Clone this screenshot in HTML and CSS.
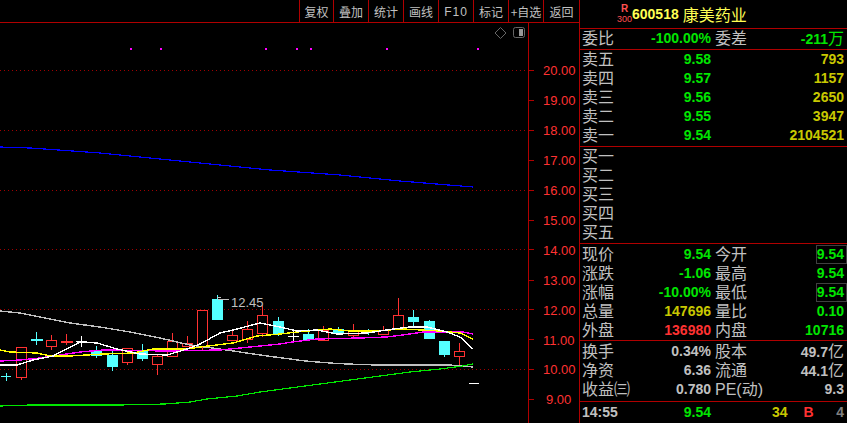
FILE: index.html
```html
<!DOCTYPE html>
<html lang="zh-CN">
<head>
  <meta charset="UTF-8">
  <title>康美药业 600518</title>
  <link rel="stylesheet" href="styles.css">
</head>
<body>
  <div class="left">
    <div class="toolbar">
      <span class="tool first">复权</span>
      <span class="tool">叠加</span>
      <span class="tool">统计</span>
      <span class="tool">画线</span>
      <span class="tool latin">F10</span>
      <span class="tool">标记</span>
      <span class="tool">+自选</span>
      <span class="tool last">返回</span>
    </div>
    <svg class="chart" viewBox="0 23 579 400" width="579" height="400">
      <!-- grid -->
      <path class="grid" d="M0 70.5H527M0 130.5H527M0 190.5H527M0 249.5H527M0 309.5H527M0 369.5H527"/>
      <path class="axis" d="M528.5 23V423"/>
      <path class="axis" d="M529 70.5h5M529 100.5h5M529 130.5h5M529 160.5h5M529 190.5h5M529 220.5h5M529 249.5h5M529 280.5h5M529 309.5h5M529 339.5h5M529 369.5h5M529 399.5h5"/>
      <g class="price">
        <text x="543" y="75">20.00</text>
        <text x="543" y="105">19.00</text>
        <text x="543" y="135">18.00</text>
        <text x="543" y="165">17.00</text>
        <text x="543" y="195">16.00</text>
        <text x="543" y="225">15.00</text>
        <text x="543" y="255">14.00</text>
        <text x="543" y="285">13.00</text>
        <text x="543" y="315">12.00</text>
        <text x="543" y="345">11.00</text>
        <text x="543" y="374">10.00</text>
        <text x="546" y="404">9.00</text>
      </g>

      <!-- marks and icons -->
      <path class="mark" d="M130 48h2v2h-2zM160 48h2v2h-2zM265 48h2v2h-2zM296 48h2v2h-2zM310 48h2v2h-2zM386 48h2v2h-2zM477 48h2v2h-2z"/>
      <path class="icon" d="M500.5 27.5l5.5 5.5-5.5 5.5-5.5-5.5z"/>
      <rect class="icon" x="513.5" y="27.5" width="11" height="10" rx="2"/>
      <rect class="icon-fill" x="519" y="29" width="4" height="7"/>

      <!-- candles -->
      <path class="up" d="M16.5 347.5h10v30h-10zM21.5 377.5v2
        M46.5 340.5h10v6h-10zM51.5 335v5M51.5 347v3
        M61 341.5h11v1h-11zM66.5 334v11
        M152.5 356.5h10v8h-10zM157.5 354v2M157.5 365v10
        M167.5 341.5h10v15h-10zM172.5 333v8
        M122.5 348.5h10v14h-10zM127.5 363v2
        M182.5 343.5h10v3h-10zM187.5 336v7
        M197.5 310.5h10v36h-10zM202.5 347v3
        M227.5 335.5h10v5h-10zM232.5 329v6
        M242.5 329.5h10v10h-10zM247.5 321v8M247.5 340v3
        M257.5 315.5h10v18h-10zM262.5 305v10M262.5 334v3
        M318.5 330.5h10v10h-10zM323.5 326v4
        M348.5 331.5h10v4h-10zM353.5 324v7M353.5 336v3
        M378.5 330.5h10v4h-10zM383.5 326v4
        M393.5 315.5h10v13h-10zM398.5 298v17
        M454.5 351.5h10v5h-10zM459.5 343v8M459.5 357v9"/>
      <path class="down" d="M1 376.5h10M6.5 373v8
        M31 339.5h11v1h-11zM36.5 332v13
        M91.5 351.5h10v4h-10zM96.5 346v5M96.5 356v2
        M107.5 355.5h10v11h-10zM112.5 351v4M112.5 367v4
        M137.5 351.5h10v7h-10zM142.5 344v7M142.5 359v2
        M212.5 299.5h10v20h-10zM217.5 295v4
        M273.5 321.5h10v12h-10zM278.5 317v4M278.5 334v2
        M303.5 334.5h10v5h-10zM308.5 329v5M308.5 340v1
        M333.5 329.5h10v3h-10zM338.5 327v2M338.5 333v1
        M363 332.5h11M368.5 329v6
        M408.5 317.5h10v4h-10zM413.5 310v7M413.5 322v4
        M424.5 321.5h10v17h-10zM429.5 320v1
        M439.5 341.5h10v13h-10zM444.5 355v2"/>
      <path class="doji" d="M76 341.5h11M81.5 336v11M288 336.5h11M293.5 331v10M469 383.5h10"/>

      <!-- moving averages -->
      <polyline class="ma gray" points="0,311 20,313 50,319 70,323 100,327 130,332 160,338 190,345 220,349 240,352 260,355 275,357 290,359 305,361 330,363 347,364 377,365 450,365 473,367"/>
      <polyline class="ma green-line" points="0,406 30,405 120,405 165,404 190,402 207,399 237,396 260,392 290,388 320,384 350,380 380,376 410,372 440,369 463,366 473,364"/>
      <polyline class="ma magenta" points="0,361 20,360 40,358 60,355 80,352 103,350 167,351 220,350 230,349 250,347 260,346 280,344 292,342 317,339 360,338 387,337 410,334 423,332 463,332 473,334"/>
      <polyline class="ma yellow-line" points="0,350 10,352 37,353 50,356 70,356 103,354 133,353 153,349 187,349 200,347 233,343 257,336 280,334 297,332 330,329 350,331 373,331 403,329 440,331 460,333 473,339"/>
      <polyline class="ma white" points="0,365 17,365 33,360 53,356 80,342 97,343 117,349 140,354 167,355 187,349 200,344 220,333 233,330 260,323 280,327 297,331 317,330 337,334 367,333 393,329 410,327 427,327 447,332 460,337 473,349"/>
      <polyline class="ma blue" points="0,147 30,148 100,153 180,161 270,170 340,175 400,181 473,187"/>

      <!-- high label -->
      <path class="tag" d="M217 297h4M218 299.5h11"/>
      <text class="high" x="231" y="307">12.45</text>
    </svg>
  </div>

  <div class="panel">
    <div class="head">
      <span class="badge"><b>R</b>300</span>
      <span class="code">600518</span>
      <span class="name">康美药业</span>
    </div>
    <div class="sec rows">
      <div class="row"><div class="cell"><span>委比</span><b class="green">-100.00%</b></div><div class="cell"><span>委差</span><b class="green">-211<i>万</i></b></div></div>
    </div>
    <div class="sec rows">
      <div class="row"><div class="cell"><span>卖五</span><b class="green">9.58</b></div><div class="cell"><b class="yellow">793</b></div></div>
      <div class="row"><div class="cell"><span>卖四</span><b class="green">9.57</b></div><div class="cell"><b class="yellow">1157</b></div></div>
      <div class="row"><div class="cell"><span>卖三</span><b class="green">9.56</b></div><div class="cell"><b class="yellow">2650</b></div></div>
      <div class="row"><div class="cell"><span>卖二</span><b class="green">9.55</b></div><div class="cell"><b class="yellow">3947</b></div></div>
      <div class="row"><div class="cell"><span>卖一</span><b class="green">9.54</b></div><div class="cell"><b class="yellow">2104521</b></div></div>
    </div>
    <div class="sec rows">
      <div class="row"><div class="cell"><span>买一</span></div></div>
      <div class="row"><div class="cell"><span>买二</span></div></div>
      <div class="row"><div class="cell"><span>买三</span></div></div>
      <div class="row"><div class="cell"><span>买四</span></div></div>
      <div class="row"><div class="cell"><span>买五</span></div></div>
    </div>
    <div class="sec rows stats">
      <div class="row"><div class="cell"><span>现价</span><b class="green">9.54</b></div><div class="cell"><span>今开</span><b class="green boxed">9.54</b></div></div>
      <div class="row"><div class="cell"><span>涨跌</span><b class="green">-1.06</b></div><div class="cell"><span>最高</span><b class="green">9.54</b></div></div>
      <div class="row"><div class="cell"><span>涨幅</span><b class="green">-10.00%</b></div><div class="cell"><span>最低</span><b class="green boxed">9.54</b></div></div>
      <div class="row"><div class="cell"><span>总量</span><b class="yellow">147696</b></div><div class="cell"><span>量比</span><b class="green">0.10</b></div></div>
      <div class="row"><div class="cell"><span>外盘</span><b class="red">136980</b></div><div class="cell"><span>内盘</span><b class="green">10716</b></div></div>
    </div>
    <div class="sec rows info">
      <div class="row"><div class="cell"><span>换手</span><b>0.34%</b></div><div class="cell"><span>股本</span><b>49.7<i>亿</i></b></div></div>
      <div class="row"><div class="cell"><span>净资</span><b>6.36</b></div><div class="cell"><span>流通</span><b>44.1<i>亿</i></b></div></div>
      <div class="row"><div class="cell"><span>收益㈢</span><b>0.780</b></div><div class="cell"><span>PE(动)</span><b>9.3</b></div></div>
    </div>
    <div class="tick">
      <div class="cell"><b>14:55</b><b class="green">9.54</b></div>
      <div class="cell tick-right"><b class="yellow">34</b><b class="red">B</b><b class="dim">4</b></div>
    </div>
  </div>
</body>
</html>
```

FILE: styles.css
```css
html, body {
  margin: 0;
  height: 423px;
  overflow: hidden;
  background: #000;
}
body {
  display: flex;
  color: #c0c0c0;
  font-family: "Liberation Sans", "Noto Sans CJK SC", sans-serif;
}
.left {
  width: 579px;
  flex: none;
}
.toolbar {
  display: flex;
  justify-content: flex-end;
  height: 22px;
  border-bottom: 1px solid #b00000;
}
.tool {
  width: 34px;
  border-left: 1px solid #b00000;
  font-size: 12px;
  line-height: 24px;
  text-align: center;
  font-family: "Noto Sans CJK SC", sans-serif;
}
.tool.first { width: 33px; }
.tool.last { width: 35px; }
.tool.latin { font-family: "Liberation Sans", sans-serif; letter-spacing: 1px; }
.chart {
  display: block;
}
.grid {
  stroke: #a00000;
  stroke-width: 1;
  stroke-dasharray: 1 3;
  fill: none;
  shape-rendering: crispEdges;
}
.axis {
  stroke: #b00000;
  stroke-width: 1;
  fill: none;
  shape-rendering: crispEdges;
}
.price text {
  fill: #ff3232;
  font-size: 13px;
}
.mark { fill: #ff00ff; shape-rendering: crispEdges; }
.icon { fill: none; stroke: #666; }
.icon-fill { fill: #999; shape-rendering: crispEdges; }
.up, .down, .doji, .ma, .tag {
  shape-rendering: crispEdges;
  stroke-width: 1;
}
.up { fill: none; stroke: #ff3232; }
.down { fill: #54ffff; stroke: #54ffff; }
.doji { fill: none; stroke: #fff; }
.ma { fill: none; stroke-width: 1.4; }
.gray { stroke: #c0c0c0; }
.green-line { stroke: #00e600; stroke-width: 1.2; }
.magenta { stroke: #ff00ff; }
.yellow-line { stroke: #ffff00; }
.white { stroke: #fff; }
.blue { stroke: #0000ff; stroke-width: 1.2; }
.tag { fill: none; stroke: #c0c0c0; }
.high { fill: #c0c0c0; font-size: 13px; }

.panel {
  width: 268px;
  flex: none;
  border-left: 1px solid #b00000;
  box-sizing: border-box;
}
.head {
  display: flex;
  align-items: center;
  height: 28px;
  padding-left: 37px;
  color: #ffff54;
}
.badge {
  width: 15px;
  font-size: 9px;
  line-height: 10px;
  text-align: center;
  color: #ff5050;
}
.badge b { display: block; font-size: 10px; }
.code {
  font-size: 14px;
  font-weight: bold;
  margin-right: 4px;
}
.name {
  font-family: "Noto Sans CJK SC", sans-serif;
  font-size: 16px;
}
.sec {
  border-top: 1px solid #b00000;
}
.rows {
  padding: 0 2px 1px 2px;
}
.stats {
  padding: 1px 2px 0 2px;
}
.info {
  padding: 1px 2px 2px 2px;
}
.row {
  display: flex;
  gap: 4px;
  height: 19px;
  font-size: 16px;
  line-height: 19px;
}
.cell {
  display: flex;
  justify-content: space-between;
  width: 129px;
  white-space: nowrap;
}
.cell b:only-child { margin-left: auto; }
.cell b {
  font-size: 14px;
  color: #c0c0c0;
}
.cell i {
  font-style: normal;
  font-weight: normal;
  font-size: 16px;
}
.cell b.green { color: #00e600; }
.cell b.yellow { color: #c8c800; }
.cell b.red { color: #ff3232; }
.cell b.dim { color: #808080; }
.boxed {
  outline: 1px solid #404040;
  line-height: 17px;
  height: 17px;
  margin-top: 1px;
  margin-right: -2px;
  padding-right: 2px;
}
.tick {
  display: flex;
  gap: 4px;
  height: 22px;
  padding: 0 2px;
  border-top: 1px solid #b00000;
  line-height: 21px;
}
.tick-right {
  justify-content: flex-start;
}
.tick-right .yellow { margin-left: 57px; }
.tick-right .red { margin-left: 16px; }
.tick-right .dim { margin-left: auto; }
```
